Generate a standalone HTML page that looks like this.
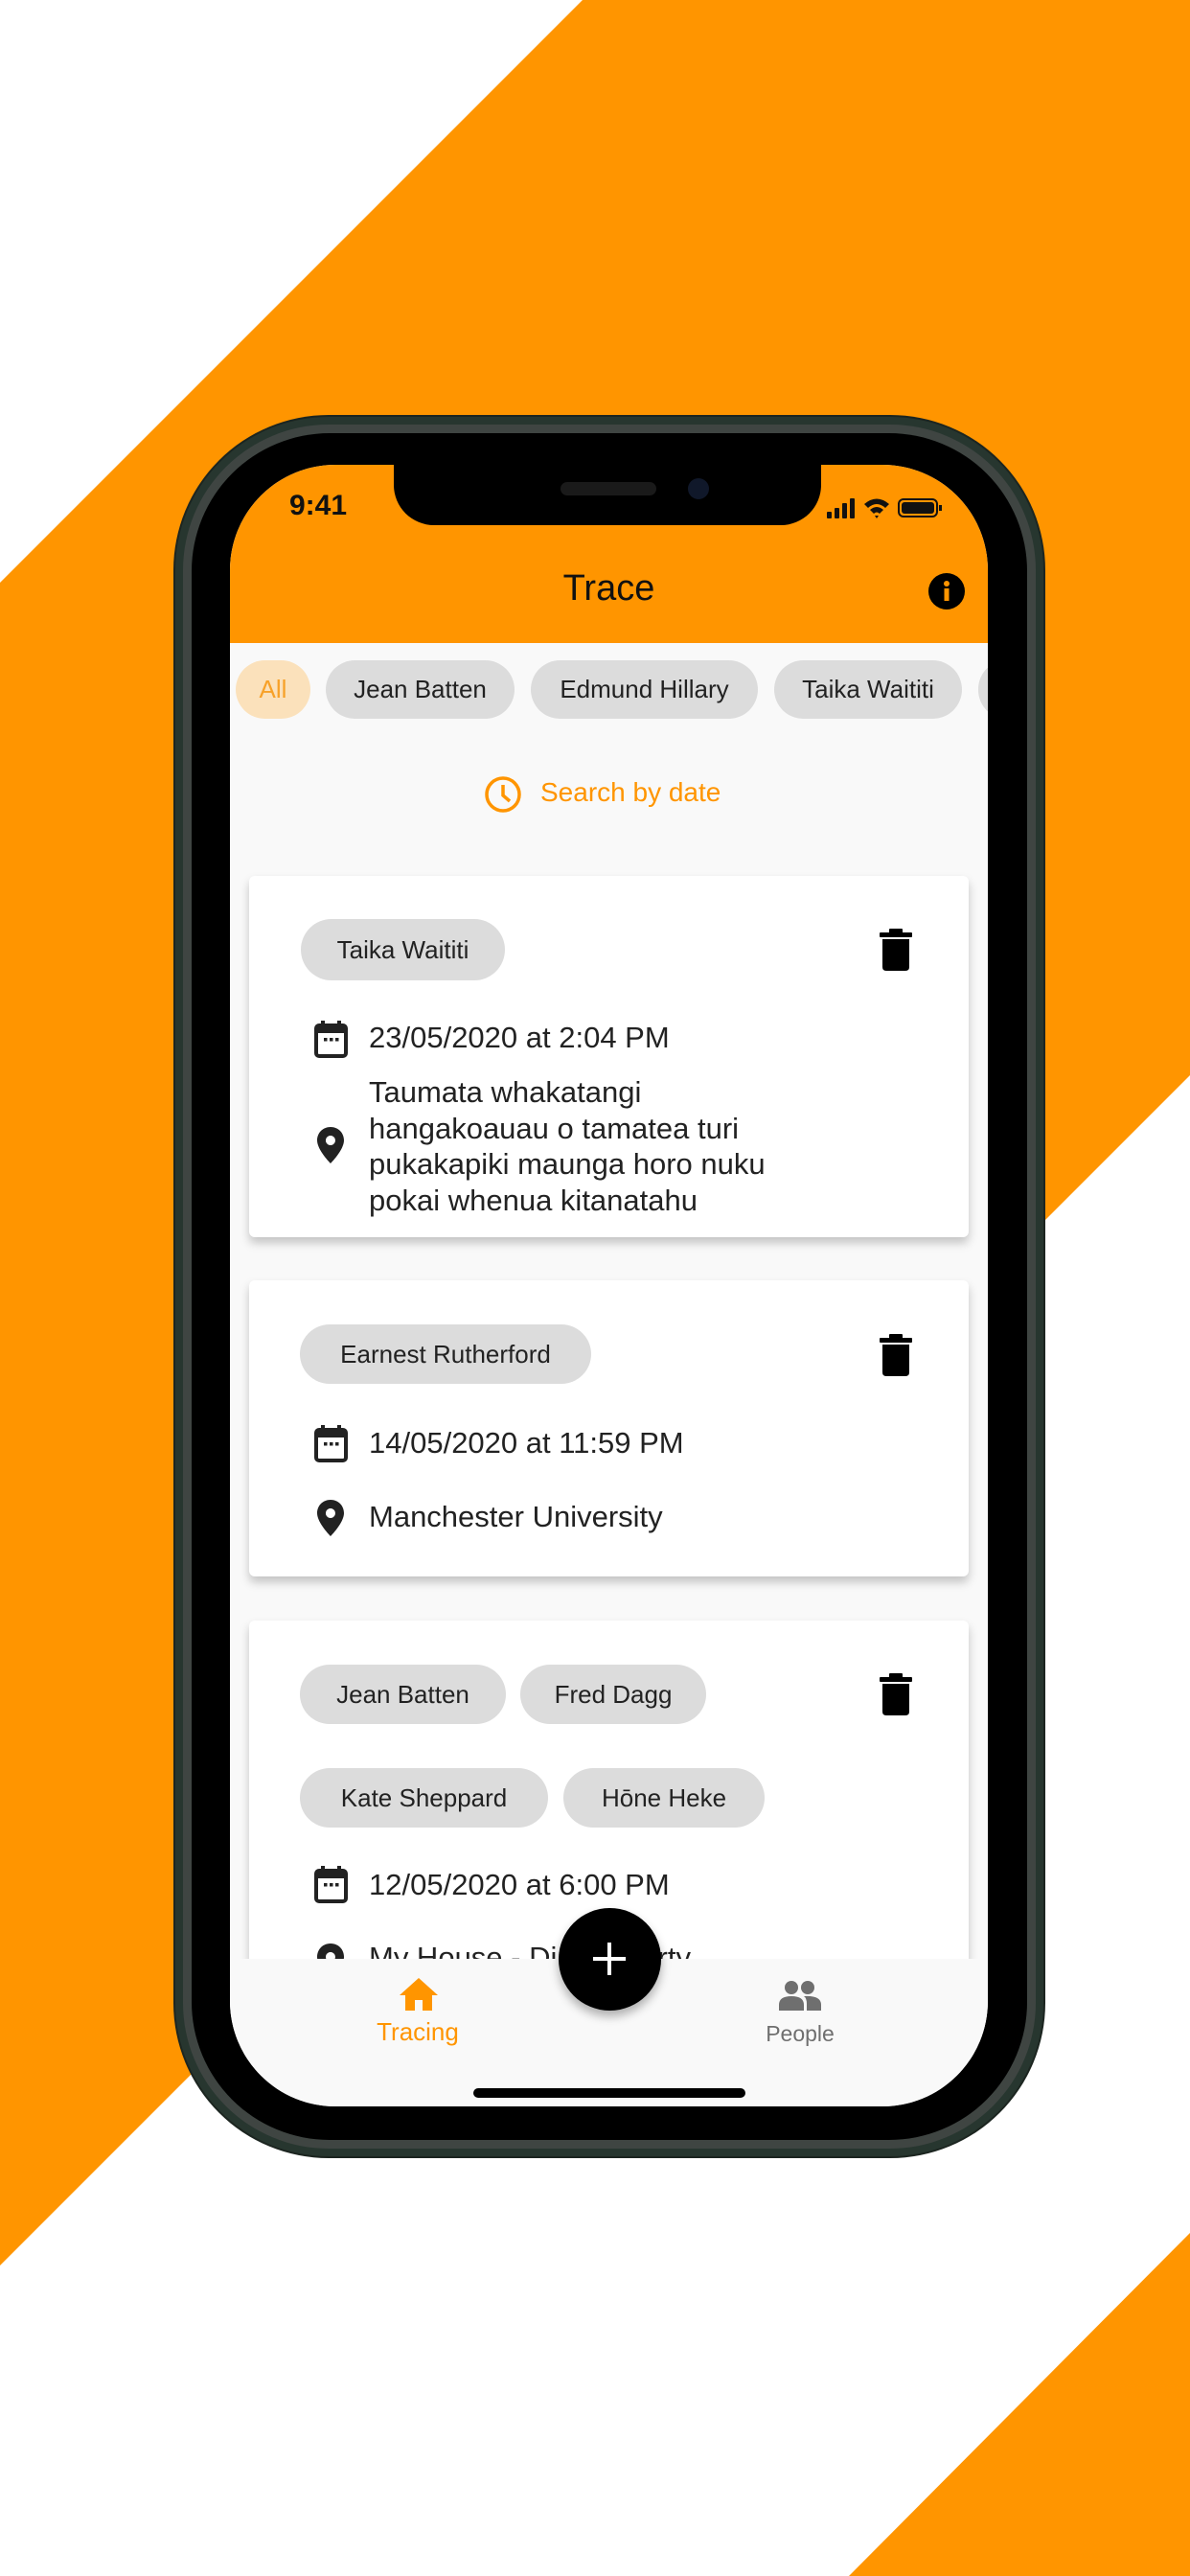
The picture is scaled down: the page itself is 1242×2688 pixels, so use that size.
<!DOCTYPE html>
<html><head><meta charset="utf-8"><style>
*{margin:0;padding:0;box-sizing:border-box}
body{width:1242px;height:2688px;position:relative;overflow:hidden;background:#fff;font-family:"Liberation Sans","DejaVu Sans",sans-serif}
.a{position:absolute}
.chip{position:absolute;background:#dcdcdc;border-radius:32px;font-size:26px;color:#222;display:flex;align-items:center;justify-content:center}
.t{position:absolute;font-size:31px;color:#222;white-space:nowrap}
.card{position:absolute;left:260px;width:751px;background:#fff;border-radius:6px;box-shadow:0 6px 10px rgba(0,0,0,.22)}
</style></head><body>
<svg class="a" style="left:0;top:0" width="1242" height="2688">
<polygon points="608,0 1242,0 1242,1122 0,2364 0,608" fill="#ff9500"/>
<polygon points="1242,2330 1242,2688 886,2688" fill="#ff9500"/>
</svg>
<div class="a" style="left:183px;top:435px;width:906px;height:1815px;border-radius:160px;background:#27362f;box-shadow:0 0 0 2px #1c2520"></div>
<div class="a" style="left:191px;top:443px;width:890px;height:1799px;border-radius:152px;background:#3f4542"></div>
<div class="a" style="left:200px;top:452px;width:872px;height:1781px;border-radius:144px;background:#000"></div>
<div class="a" style="left:240px;top:485px;width:791px;height:1713px;border-radius:110px;background:#f9f9f9;overflow:hidden">
  <div class="a" style="left:0;top:0;width:791px;height:186px;background:#ff9500"></div>
  <div class="a" style="left:171px;top:-10px;width:446px;height:73px;background:#000;border-radius:0 0 42px 42px"></div>
  <div class="a" style="left:345px;top:18px;width:100px;height:14px;border-radius:7px;background:#1a1a1a"></div>
  <div class="a" style="left:478px;top:14px;width:22px;height:22px;border-radius:11px;background:#10182a"></div>
  <div class="a" style="left:62px;top:26px;font-size:30px;font-weight:bold;color:#111">9:41</div>
  <svg class="a" style="left:620px;top:32px" width="130" height="26">
    <rect x="3" y="17" width="5" height="7" rx="1" fill="#111"/><rect x="11" y="13" width="5" height="11" rx="1" fill="#111"/><rect x="19" y="8" width="5" height="16" rx="1" fill="#111"/><rect x="27" y="3" width="5" height="21" rx="1" fill="#111"/>
    <path d="M42 9 Q55 -2 68 9 L64 13 Q55 5 46 13Z M48 15 Q55 9 62 15 L58 19 Q55 16 52 19Z M53 21 L55 24 L57 21Z" fill="#111"/>
    <rect x="78" y="4" width="40" height="18" rx="5" fill="none" stroke="#111" stroke-width="2"/><rect x="81" y="7" width="34" height="12" rx="3" fill="#111"/><rect x="120" y="10" width="3" height="6" fill="#111"/>
  </svg>
  <div class="a" style="left:0;top:108px;width:791px;text-align:center;font-size:38px;color:#111">Trace</div>
  <svg class="a" style="left:728px;top:112px" width="40" height="40"><circle cx="20" cy="20" r="19" fill="#000"/><rect x="17.5" y="17" width="5" height="13" fill="#ff9500"/><circle cx="20" cy="12" r="3" fill="#ff9500"/></svg>
  <div class="chip" style="left:6px;top:204px;width:78px;height:61px;background:#fbe1bb;color:#f7a128">All</div>
  <div class="chip" style="left:100px;top:204px;width:197px;height:61px">Jean Batten</div>
  <div class="chip" style="left:314px;top:204px;width:237px;height:61px">Edmund Hillary</div>
  <div class="chip" style="left:568px;top:204px;width:196px;height:61px">Taika Waititi</div>
  <div class="chip" style="left:781px;top:204px;width:60px;height:61px"></div>
  <svg class="a" style="left:265px;top:324px" width="40" height="40"><circle cx="20" cy="20" r="17" fill="none" stroke="#ff9500" stroke-width="3.5"/><path d="M20 10 V21 L27 27" fill="none" stroke="#ff9500" stroke-width="3.5"/></svg>
  <div class="a" style="left:324px;top:326px;font-size:28px;color:#ff9500">Search by date</div>
</div>
<div class="a" style="left:240px;top:485px;width:791px;height:1559px;overflow:hidden">
 <div style="position:absolute;left:-240px;top:-485px;width:1242px;height:2688px">
  <div class="card" style="top:914px;height:377px"></div>
  <div class="chip" style="left:314px;top:959px;width:213px;height:64px">Taika Waititi</div>
  <div class="t" style="left:385px;top:1065px">23/05/2020 at 2:04 PM</div>
  <div class="t" style="left:385px;top:1121px;line-height:37.5px;white-space:normal;width:520px">Taumata whakatangi<br>hangakoauau o tamatea turi<br>pukakapiki maunga horo nuku<br>pokai whenua kitanatahu</div>
  <div class="card" style="top:1336px;height:309px"></div>
  <div class="chip" style="left:313px;top:1382px;width:304px;height:62px">Earnest Rutherford</div>
  <div class="t" style="left:385px;top:1488px">14/05/2020 at 11:59 PM</div>
  <div class="t" style="left:385px;top:1565px">Manchester University</div>
  <div class="card" style="top:1691px;height:420px"></div>
  <div class="chip" style="left:313px;top:1737px;width:215px;height:62px">Jean Batten</div>
  <div class="chip" style="left:543px;top:1737px;width:194px;height:62px">Fred Dagg</div>
  <div class="chip" style="left:313px;top:1845px;width:259px;height:62px">Kate Sheppard</div>
  <div class="chip" style="left:588px;top:1845px;width:210px;height:62px">Hōne Heke</div>
  <div class="t" style="left:385px;top:1949px">12/05/2020 at 6:00 PM</div>
  <div class="t" style="left:385px;top:2025px">My House - Dinner party</div>
  <svg class="a" style="left:0;top:0" width="1242" height="2100">
   <defs>
    <g id="trash"><rect x="2" y="6" width="34" height="5" rx="1"/><rect x="12" y="2" width="14" height="5" rx="1"/><path d="M5 13 H33 V42 Q33 46 29 46 H9 Q5 46 5 42Z"/></g>
    <g id="cal"><rect x="3" y="5" width="31" height="32" rx="3" fill="none" stroke="#222" stroke-width="4"/><rect x="3" y="5" width="31" height="8" fill="#222"/><rect x="8" y="0" width="4" height="8" fill="#222"/><rect x="25" y="0" width="4" height="8" fill="#222"/><rect x="11" y="18" width="3.5" height="3.5" fill="#222"/><rect x="17" y="18" width="3.5" height="3.5" fill="#222"/><rect x="23" y="18" width="3.5" height="3.5" fill="#222"/></g>
    <g id="pin"><path d="M14 0 C6 0 0 6 0 14 C0 24 14 38 14 38 C14 38 28 24 28 14 C28 6 22 0 14 0Z M14 9 A5 5 0 1 1 13.9 9Z" fill="#222" fill-rule="evenodd"/></g>
   </defs>
   <use href="#trash" x="916" y="967"/>
   <use href="#trash" x="916" y="1390"/>
   <use href="#trash" x="916" y="1744"/>
   <use href="#cal" x="327" y="1065"/>
   <use href="#cal" x="327" y="1487"/>
   <use href="#cal" x="327" y="1947"/>
   <use href="#pin" x="331" y="1176"/>
   <use href="#pin" x="331" y="1565"/>
   <use href="#pin" x="331" y="2028"/>
  </svg>
 </div>
</div>
<div class="a" style="left:240px;top:2044px;width:791px;height:154px;background:#f9f9f9;border-radius:0 0 110px 110px"></div>
<svg class="a" style="left:416px;top:2063px" width="42" height="36"><path d="M21 1 L41 19 H35 V35 H25 V24 H17 V35 H7 V19 H1Z" fill="#ff9500"/></svg>
<div class="a" style="left:376px;top:2105px;width:120px;text-align:center;font-size:26px;color:#ff9500">Tracing</div>
<svg class="a" style="left:813px;top:2066px" width="44" height="32"><circle cx="13" cy="8" r="7" fill="#6f6f6f"/><circle cx="30" cy="8" r="7" fill="#6f6f6f"/><path d="M0 32 V26 Q0 17 13 17 Q26 17 26 26 V32Z M29 32 V25 Q29 19 26 17 Q44 16 44 26 V32Z" fill="#6f6f6f"/></svg>
<div class="a" style="left:775px;top:2109px;width:120px;text-align:center;font-size:23px;color:#6f6f6f">People</div>
<div class="a" style="left:583px;top:1991px;width:107px;height:107px;border-radius:54px;background:#000;box-shadow:0 6px 10px rgba(0,0,0,.3)"></div>
<div class="a" style="left:634px;top:2027px;width:4px;height:34px;background:#fff"></div>
<div class="a" style="left:619px;top:2042px;width:34px;height:4px;background:#fff"></div>
<div class="a" style="left:494px;top:2179px;width:284px;height:10px;border-radius:5px;background:#000"></div>
</body></html>
